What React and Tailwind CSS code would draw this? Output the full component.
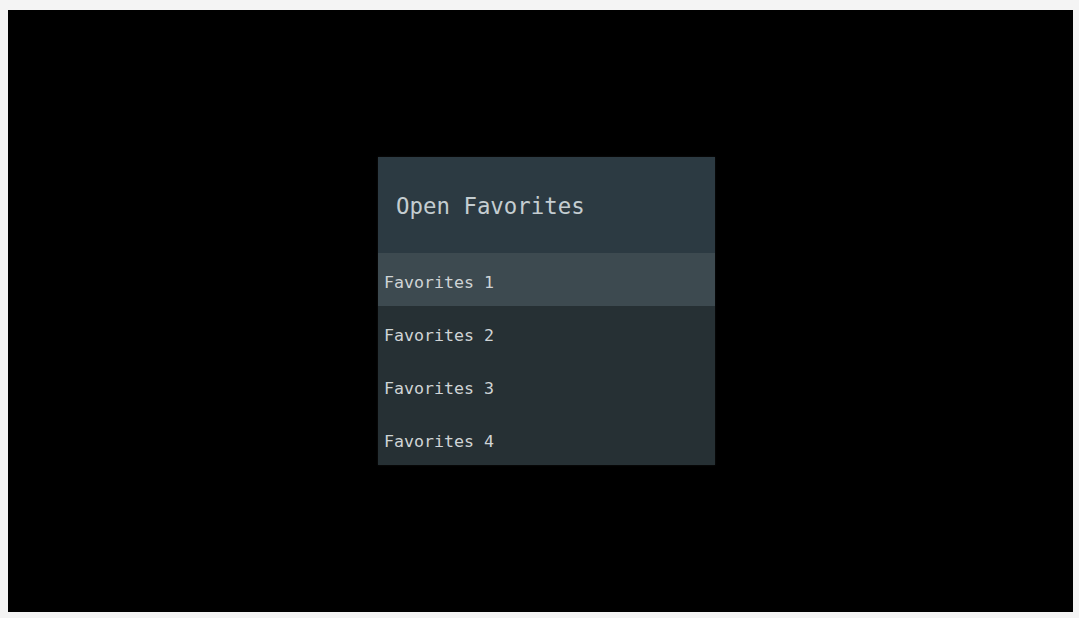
export default function App() {
  const items = ["Favorites 1", "Favorites 2", "Favorites 3", "Favorites 4"];
  return (
    <div className="w-[1079px] h-[618px] bg-[#f4f4f4] pt-[10px] pl-[8px] pr-[6px] pb-[6px] flex">
      <div className="flex-1 bg-black pl-[370px] pt-[147px]" style={{ fontFamily: '"DejaVu Sans Mono", "Liberation Mono", monospace' }}>
        <div className="w-[337px] bg-[#263034] shadow-[0_0_2px_rgba(255,255,255,0.08)]">
          <div className="h-[96px] bg-[#2c3a42] flex items-center pl-[18px] pt-[4px]">
            <span className="text-[22.4px] text-[#c4cdd1]">Open Favorites</span>
          </div>
          {items.map((t, i) => (
            <div
              key={t}
              className={
                "h-[53px] flex items-center pl-[6px] pt-[7px] text-[16.6px] text-[#cfd4d6] " +
                (i === 0 ? "bg-[#3d4a50]" : "")
              }
            >
              {t}
            </div>
          ))}
        </div>
      </div>
    </div>
  );
}
